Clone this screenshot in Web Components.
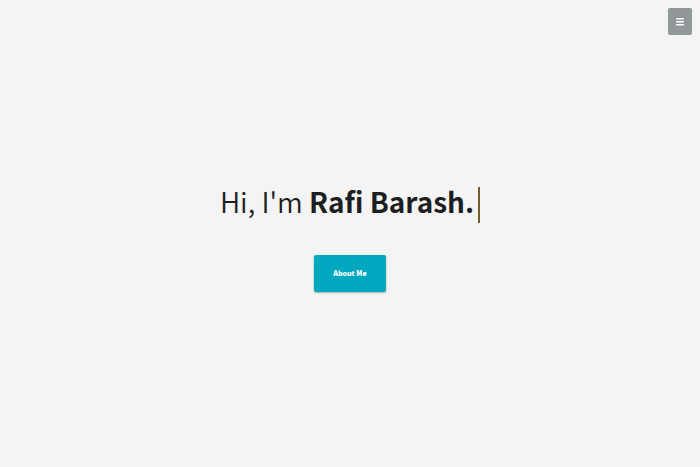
<!DOCTYPE html>
<html lang="en">
<head>
<meta charset="utf-8">
<meta name="viewport" content="width=device-width, initial-scale=1">
<title>Rafi Barash</title>
<style>
  body { margin: 0; background: #f4f4f4; color: #1b1f22; font-family: "Noto Sans CJK SC", "Noto Sans CJK JP", sans-serif; }
</style>
</head>
<body>
<landing-page>
  <menu-toggle slot="menu"></menu-toggle>
  <typed-heading>Hi, I'm <b>Rafi Barash.</b></typed-heading>
  <action-button>About Me</action-button>
</landing-page>
<script>
  const define = (name, html) => customElements.define(name, class extends HTMLElement {
    constructor() {
      super();
      this.attachShadow({ mode: "open" }).innerHTML = html;
    }
  });

  define("landing-page", `
    <style>
      :host { display: grid; min-height: 100vh; }
      header, main { grid-area: 1 / 1; }
      header { display: flex; justify-content: flex-end; align-items: flex-start; padding: 8px; }
      main { display: flex; flex-direction: column; align-items: center; justify-content: center; gap: 32px; place-self: center; padding-top: 8px; }
      header { pointer-events: none; }
      ::slotted(menu-toggle) { pointer-events: auto; }
    </style>
    <main><slot></slot></main>
    <header><slot name="menu"></slot></header>`);

  define("menu-toggle", `
    <style>
      :host { display: block; }
      button { display: grid; place-items: center; width: 24px; height: 27px; padding: 0; border: 0; border-radius: 2px; background: #929799; color: #fff; cursor: pointer; }
      svg { display: block; }
    </style>
    <button type="button" aria-label="Menu">
      <svg width="8" height="9" viewBox="0 0 8 9" fill="currentColor" aria-hidden="true">
        <rect y="1" width="8" height="1.4" rx=".4"/><rect y="4" width="8" height="1.4" rx=".4"/><rect y="7" width="8" height="1.4" rx=".4"/>
      </svg>
    </button>`);

  define("typed-heading", `
    <style>
      :host { display: block; }
      h1 { display: flex; align-items: flex-start; gap: 4px; margin: 0; font-size: 28px; line-height: 36px; font-weight: 350; }
      ::slotted(b) { font-weight: 700; }
      .caret { width: 2px; height: 36px; margin-top: 4px; background: #74602f; }
    </style>
    <h1><span><slot></slot></span><span class="caret" aria-hidden="true"></span></h1>`);

  define("action-button", `
    <style>
      :host { display: block; }
      button { display: block; padding: 10px 19px; border: 0; border-radius: 2px; background: #00a8bf; color: #fff; font: 900 7px/17px "Noto Sans CJK SC", sans-serif; box-shadow: 0 1px 2px rgb(0 0 0 / 30%); cursor: pointer; }
    </style>
    <button type="button"><slot></slot></button>`);
</script>
</body>
</html>
